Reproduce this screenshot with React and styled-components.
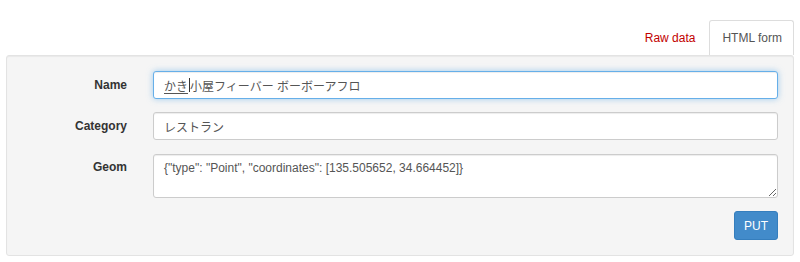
import React from 'react';
import styled, { createGlobalStyle } from 'styled-components';

const GlobalStyle = createGlobalStyle`
  body {
    margin: 0;
    background: #fff;
    font-family: "Liberation Sans", Arial, "Noto Sans CJK JP", sans-serif;
    font-size: 12px;
    color: #333;
  }
`;

const Page = styled.div`
  padding: 20px 6px 0 6px;
`;

const Tabs = styled.ul`
  display: flex;
  justify-content: flex-end;
  list-style: none;
  margin: 0;
  padding: 0;
  height: 35px;
`;

const Tab = styled.li`
  margin-left: 2px;
  box-sizing: border-box;
  height: 35px;
  padding: 0 11px 0 12px;
  display: flex;
  align-items: center;
  font-size: 12px;
  border: 1px solid ${(props) => (props.active ? '#ddd' : 'transparent')};
  border-bottom: none;
  border-radius: 3px 3px 0 0;
  background: ${(props) => (props.active ? '#fff' : 'transparent')};
  color: ${(props) => (props.active ? '#555' : '#c20000')};
  cursor: pointer;
`;

const Well = styled.form`
  background: #f5f5f5;
  border: 1px solid #e3e3e3;
  border-radius: 3px;
  box-shadow: inset 0 1px 1px rgba(0, 0, 0, 0.05);
  padding: 15px 15px 15px 16px;
  display: grid;
  grid-template-columns: 104px 1fr;
  column-gap: 26px;
  row-gap: 13px;
`;

const Label = styled.label`
  text-align: right;
  font-weight: bold;
  font-size: 12px;
  color: #333;
  line-height: 14px;
  padding-top: ${(props) => props.top || 7}px;
`;

const Field = styled.div`
  box-sizing: border-box;
  height: 28px;
  padding: 0 10px;
  display: flex;
  align-items: center;
  background: #fff;
  border: 1px solid ${(props) => (props.focused ? '#66afe9' : '#ccc')};
  border-radius: 3px;
  box-shadow: ${(props) =>
    props.focused
      ? 'inset 0 1px 1px rgba(0,0,0,.075), 0 0 6px rgba(102,175,233,.6)'
      : 'inset 0 1px 1px rgba(0,0,0,.075)'};
  font-family: "Liberation Sans", Arial, "Noto Sans CJK JP", sans-serif;
  font-size: 12px;
  color: #555;
  white-space: nowrap;
`;

const Composing = styled.span`
  text-decoration: underline;
  text-underline-offset: 2px;
`;

const Caret = styled.span`
  display: inline-block;
  width: 1px;
  height: 14px;
  background: #333;
  margin: 0 0.5px;
`;

const TextArea = styled.textarea`
  box-sizing: border-box;
  height: 44px;
  width: 100%;
  margin: 1px 0 0 0;
  display: block;
  padding: 6px 10px;
  background: #fff;
  border: 1px solid #ccc;
  border-radius: 3px;
  box-shadow: inset 0 1px 1px rgba(0, 0, 0, 0.075);
  font-family: "Liberation Sans", Arial, sans-serif;
  font-size: 12px;
  line-height: 14px;
  color: #555;
  resize: vertical;
  outline: none;
`;

const Actions = styled.div`
  grid-column: 2;
  display: flex;
  justify-content: flex-end;
`;

const Button = styled.button`
  box-sizing: border-box;
  height: 29px;
  width: 44px;
  padding: 0;
  background: #428bca;
  border: 1px solid #357ebd;
  border-radius: 3px;
  color: #fff;
  font-family: "Liberation Sans", Arial, sans-serif;
  font-size: 12px;
  cursor: pointer;
`;

const App = () => {
  return (
    <Page>
      <GlobalStyle />
      <Tabs>
        <Tab>Raw data</Tab>
        <Tab active>HTML form</Tab>
      </Tabs>
      <Well onSubmit={(e) => e.preventDefault()}>
        <Label>Name</Label>
        <Field focused>
          <Composing>かき</Composing>
          <Caret />
          小屋フィーバー ボーボーアフロ
        </Field>

        <Label>Category</Label>
        <Field>レストラン</Field>

        <Label top={7}>Geom</Label>
        <TextArea
          readOnly
          value={'{"type": "Point", "coordinates": [135.505652, 34.664452]}'}
        />

        <Actions>
          <Button type="submit">PUT</Button>
        </Actions>
      </Well>
    </Page>
  );
};

export default App;
